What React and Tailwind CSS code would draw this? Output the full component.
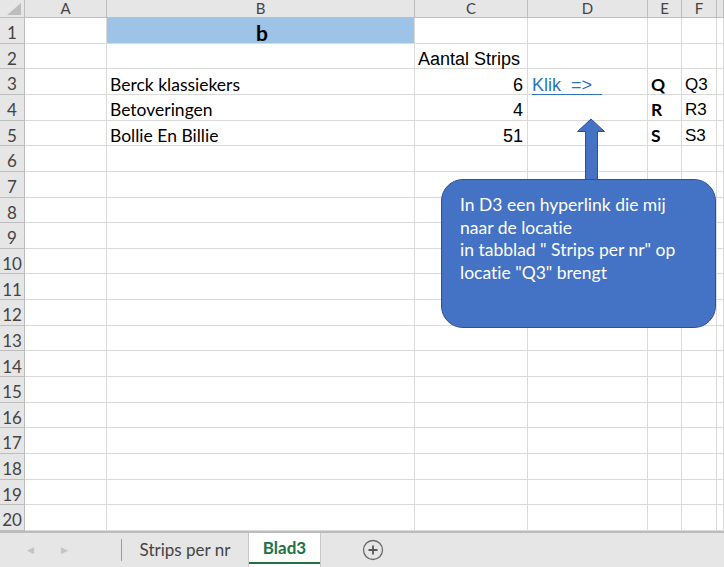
import React from 'react';

const cols = ['A', 'B', 'C', 'D', 'E', 'F', ''];

const arial = 'font-["Liberation_Sans",Arial,sans-serif]';

const cells = {
  1: {B: {text: 'b', cls: 'bg-[#9dc3e6] justify-center font-bold text-[21px] text-black'}},
  2: {C: {text: 'Aantal Strips', cls: `${arial} text-[18px] pl-[2px]`}},
  3: {
    B: {text: 'Berck klassiekers'},
    C: {text: '6', cls: `justify-end ${arial} text-[18px] pr-[4px]`},
    D: {text: 'Klik  =>\u00a0\u00a0', cls: 'link'},
    E: {text: 'Q', cls: 'font-bold pl-[3px]'},
    F: {text: 'Q3', cls: `${arial} text-[17px] pl-[3px]`},
  },
  4: {
    B: {text: 'Betoveringen'},
    C: {text: '4', cls: `justify-end ${arial} text-[18px] pr-[4px]`},
    E: {text: 'R', cls: 'font-bold pl-[3px]'},
    F: {text: 'R3', cls: `${arial} text-[17px] pl-[3px]`},
  },
  5: {
    B: {text: 'Bollie En Billie'},
    C: {text: '51', cls: `justify-end ${arial} text-[18px] pr-[4px]`},
    E: {text: 'S', cls: 'font-bold pl-[3px]'},
    F: {text: 'S3', cls: `${arial} text-[17px] pl-[3px]`},
  },
};

const rows = Array.from({length: 20}, (_, i) => i + 1);

const Cell = ({cell}) => {
  if (!cell) return <div className="border-r border-b border-[#dadada] bg-white" />;
  if (cell.cls === 'link') {
    return (
      <div className="border-r border-b border-[#dadada] bg-white flex items-center pt-[6px] pl-[4px] overflow-visible whitespace-pre">
        <span className={`${arial} text-[18px] leading-[22px] text-[#2e75b6] underline underline-offset-[3px] decoration-[1px]`}>{cell.text}</span>
      </div>
    );
  }
  return (
    <div className={`border-r border-b border-[#dadada] flex items-center pt-[6px] pl-[3px] whitespace-nowrap text-[17.5px] leading-[22px] text-black ${cell.cls && cell.cls.includes('bg-') ? '' : 'bg-white'} ${cell.cls || ''}`}>
      {cell.text}
    </div>
  );
};

const App = () => {
  return (
    <div className="w-[724px] h-[567px] overflow-hidden bg-white font-[Lato,sans-serif] [font-variant-ligatures:none] relative">
      <div className="grid h-[531px] grid-cols-[25px_82px_308px_113px_120px_34px_35px_1fr] grid-rows-[18px_repeat(20,minmax(0,1fr))]">
        <div className="bg-[#e6e6e6] border-r border-b border-[#bdbdbd] relative">
          <svg className="absolute right-[3px] bottom-[2px]" width="14" height="12" viewBox="0 0 14 12">
            <polygon points="14,0 14,12 0,12" fill="#bdbdbd" />
          </svg>
        </div>
        {cols.map((c, i) => (
          <div key={i} className="bg-[#e6e6e6] border-r border-b border-[#bdbdbd] flex items-center justify-center text-[15px] text-[#444]">
            {c}
          </div>
        ))}
        {rows.map(r => (
          <React.Fragment key={r}>
            <div className="bg-[#e6e6e6] border-r border-b border-[#bdbdbd] flex items-center justify-center pt-[5px] text-[17px] text-[#444]">
              {r}
            </div>
            {cols.map((c, i) => (
              <Cell key={i} cell={cells[r] && cells[r][c]} />
            ))}
          </React.Fragment>
        ))}
      </div>

      <div className="h-[36px] bg-[#e6e6e6] border-t-2 border-[#bcbcbc] flex items-stretch text-[17px] text-[#444]">
        <div className="w-[121px] flex items-center">
          <span className="ml-[27px] text-[9px] text-[#c4c4c4]">◀</span>
          <span className="ml-[27px] text-[9px] text-[#c4c4c4]">▶</span>
        </div>
        <div className="w-px my-[6px] bg-[#9a9a9a]" />
        <div className="w-[126px] flex items-center justify-center">Strips per nr</div>
        <div className="w-[73px] bg-white border-x border-[#c8c8c8] flex flex-col">
          <div className="flex-1 flex items-center justify-center font-bold text-[#217346]">Blad3</div>
          <div className="h-[2px] mb-[3px] bg-[#217346]" />
        </div>
        <div className="flex items-center ml-[41px]">
          <svg width="22" height="22" viewBox="0 0 22 22">
            <circle cx="11" cy="11" r="9.5" fill="none" stroke="#6a6a6a" strokeWidth="1.3" />
            <path d="M11 6.5v9M6.5 11h9" stroke="#555" strokeWidth="1.8" />
          </svg>
        </div>
      </div>

      <svg className="absolute left-[576px] top-[118px]" width="30" height="64" viewBox="0 0 30 64">
        <polygon points="15,1 28.5,13.5 21.5,13.5 21.5,63 9.5,63 9.5,13.5 1.5,13.5" fill="#4472c4" stroke="#2f528f" strokeWidth="1" />
      </svg>

      <div className="absolute left-[441px] top-[179px] w-[275px] h-[149px] rounded-[22px] bg-[#4472c4] border border-[#2f528f] pl-[18px] pt-[14px] text-white text-[17.5px] leading-[22.5px]">
        <div>In D3 een hyperlink die mij</div>
        <div>naar de locatie</div>
        <div>in tabblad " Strips per nr" op</div>
        <div>locatie "Q3" brengt</div>
      </div>
    </div>
  );
};

export default App;
